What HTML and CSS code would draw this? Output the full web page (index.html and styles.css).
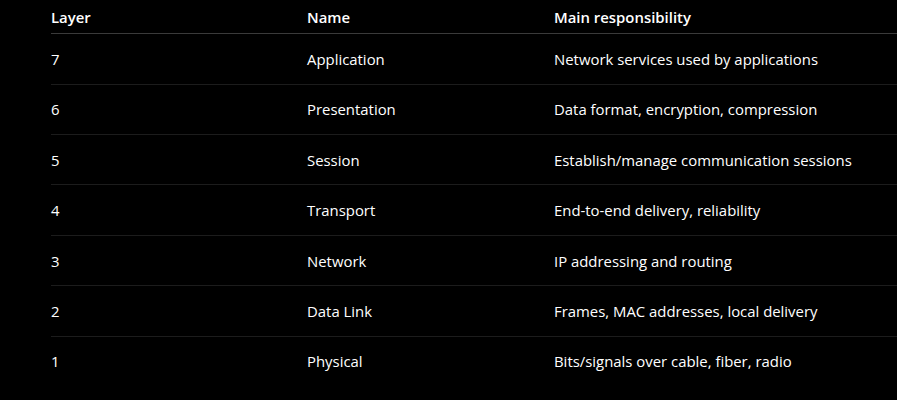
FILE: index.html
```html
<!DOCTYPE html>
<html>
<head>
    <meta charset="UTF-8">
    <title>OSI Layers</title>
    <link rel="stylesheet" href="styles.css">
</head>
<body>
    <div class="table-wrap">
        <table class="osi-table">
            <thead>
                <tr>
                    <th class="col-layer">Layer</th>
                    <th class="col-name">Name</th>
                    <th>Main responsibility</th>
                </tr>
            </thead>
            <tbody>
                <tr><td>7</td><td>Application</td><td>Network services used by applications</td></tr>
                <tr><td>6</td><td>Presentation</td><td>Data format, encryption, compression</td></tr>
                <tr><td>5</td><td>Session</td><td>Establish/manage communication sessions</td></tr>
                <tr><td>4</td><td>Transport</td><td>End-to-end delivery, reliability</td></tr>
                <tr><td>3</td><td>Network</td><td>IP addressing and routing</td></tr>
                <tr><td>2</td><td>Data Link</td><td>Frames, MAC addresses, local delivery</td></tr>
                <tr><td>1</td><td>Physical</td><td>Bits/signals over cable, fiber, radio</td></tr>
            </tbody>
        </table>
    </div>
</body>
</html>
```
FILE: styles.css
```css
html, body {
    margin: 0;
    background-color: #000000;
}
body {
    font-family: "Open Sans", "Noto Sans", sans-serif;
    font-size: 14.9px;
    color: #ffffff;
    overflow: hidden;
}
.table-wrap {
    padding-left: 51px;
}
.osi-table {
    width: 900px;
    border-collapse: collapse;
    table-layout: fixed;
}
.osi-table th,
.osi-table td {
    text-align: left;
    padding: 0;
    line-height: 20px;
}
.osi-table th {
    font-weight: 600;
    height: 33.3px;
    vertical-align: middle;
    border-bottom: 1px solid #3a3a3a;
}
.osi-table td {
    height: 49.4px;
    vertical-align: middle;
    border-bottom: 1px solid #1c1c1c;
}
.osi-table tbody tr:last-child td {
    border-bottom: none;
}
.col-layer {
    width: 256px;
}
.col-name {
    width: 247px;
}
```
